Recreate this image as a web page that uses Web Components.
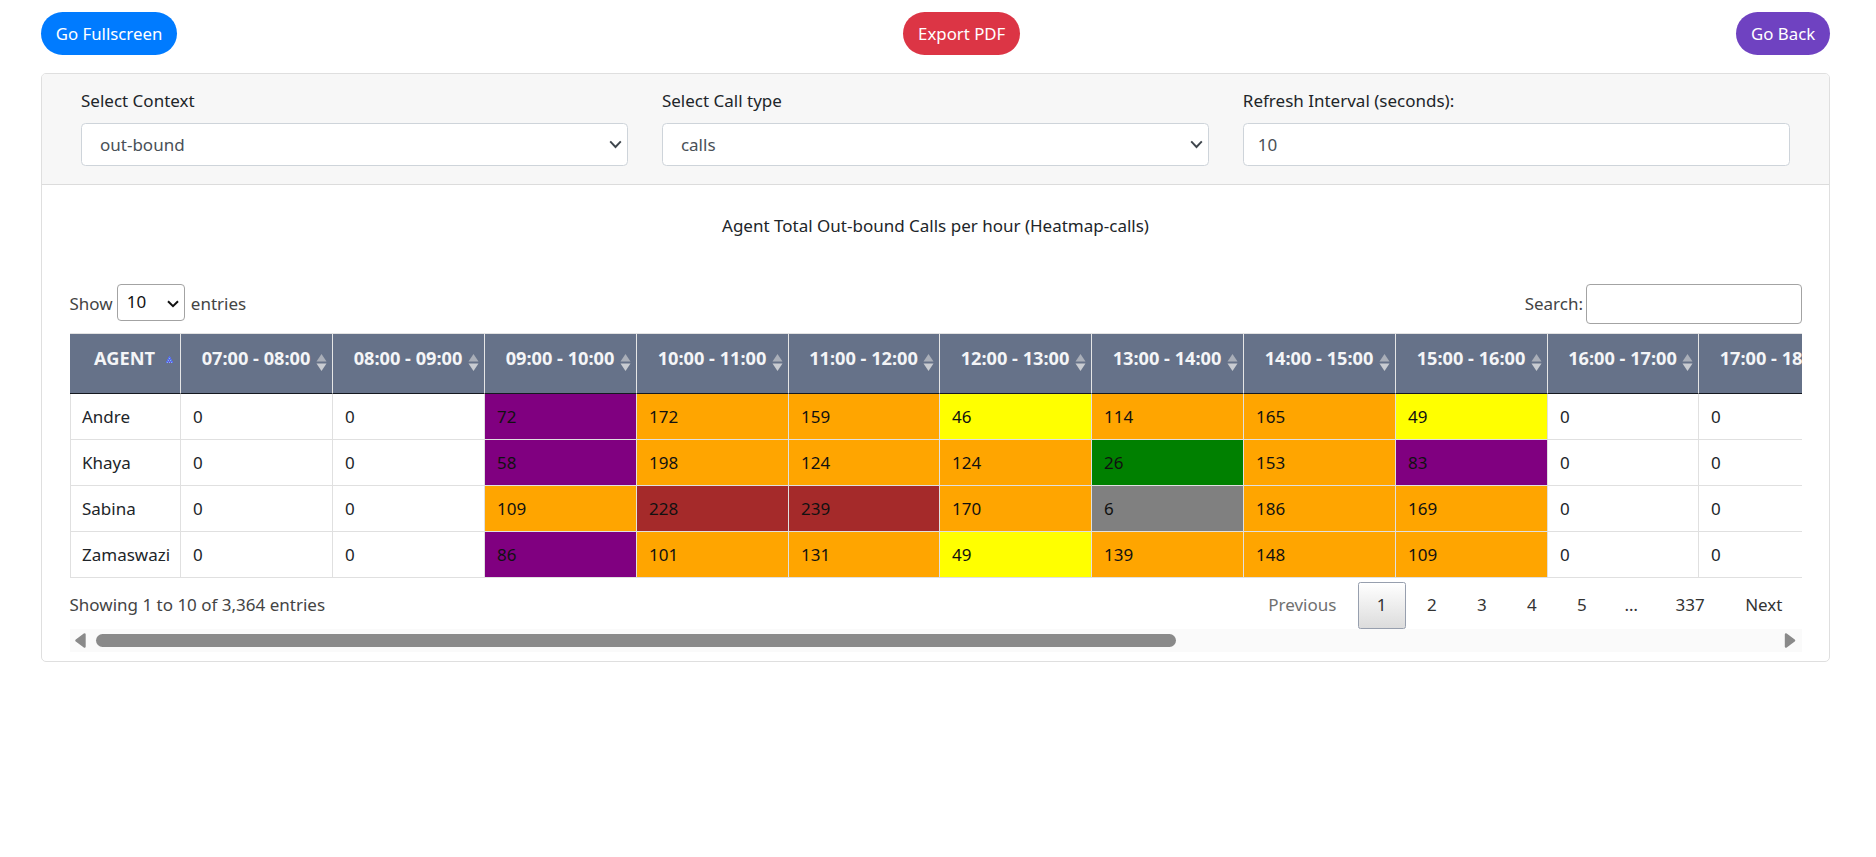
<!doctype html>
<html lang="en"><head><meta charset="utf-8"><title>Heatmap</title>
<style>
html,body{margin:0;padding:0;background:#fff;}
body{font-family:"Noto Sans","Open Sans","Liberation Sans",sans-serif;font-size:17px;color:#212529;}
</style></head>
<body>
<hm-app></hm-app>
<script>
const FONT='"Noto Sans","Open Sans","Liberation Sans",sans-serif';

class HmButton extends HTMLElement{
  constructor(){super();
    this.attachShadow({mode:'open'}).innerHTML=`<style>
      :host{display:inline-block;}
      button{display:block;height:43px;padding:0 14.8px;border:0;border-radius:21.5px;background:var(--bg,#007bff);color:#fff;font:16.8px/43px ${FONT};cursor:pointer;white-space:nowrap;}
    </style><button><slot></slot></button>`;
  }
}
customElements.define('hm-button',HmButton);

class HmField extends HTMLElement{
  constructor(){super();
    const label=this.getAttribute('label');
    const value=this.getAttribute('value');
    const isSelect=this.hasAttribute('select');
    const control=isSelect
      ?`<div class="wrap"><select><option>${value}</option></select>
         <svg class="chev" width="13" height="9" viewBox="0 0 13 9"><path d="M1.2 1.3 6.5 7 11.8 1.3" fill="none" stroke="#3f464d" stroke-width="1.9"/></svg></div>`
      :`<div class="wrap"><input value="${value}"></div>`;
    this.attachShadow({mode:'open'}).innerHTML=`<style>
      :host{display:block;min-width:0;}
      label{display:block;font:17px/25px ${FONT};color:#212529;margin-bottom:10px;}
      .wrap{position:relative;}
      select,input{display:block;box-sizing:border-box;width:100%;height:43px;padding:0 14px;margin:0;border:1px solid #ced4da;border-radius:4.5px;background:#fff;color:#495057;font:17px ${FONT};appearance:none;-webkit-appearance:none;outline:0;}
      select{padding-left:18px;}
      .chev{position:absolute;right:6px;top:17px;pointer-events:none;}
    </style><label>${label}</label>${control}`;
  }
}
customElements.define('hm-field',HmField);

class HmLength extends HTMLElement{
  constructor(){super();
    this.attachShadow({mode:'open'}).innerHTML=`<style>
      :host{display:flex;align-items:center;height:39.5px;color:#444;font:17px ${FONT};}
      .wrap{position:relative;margin:0 6px 0 4.5px;height:37px;align-self:flex-start;}
      select{display:block;box-sizing:border-box;width:67.7px;height:37px;padding:0 0 3px 8.5px;border:1px solid #a3a3a3;border-radius:4px;background:#fff;color:#111;font:17px ${FONT};appearance:none;-webkit-appearance:none;outline:0;}
      svg{position:absolute;left:50px;top:15.5px;pointer-events:none;}
    </style>Show<div class="wrap"><select><option>10</option></select><svg width="12" height="8" viewBox="0 0 12 8"><path d="M1 1.2 6 6.2 11 1.2" fill="none" stroke="#111" stroke-width="2"/></svg></div>entries`;
  }
}
customElements.define('hm-length',HmLength);

class HmSearch extends HTMLElement{
  constructor(){super();
    this.attachShadow({mode:'open'}).innerHTML=`<style>
      :host{display:flex;align-items:center;gap:3px;height:39.5px;color:#444;font:17px ${FONT};}
      input{box-sizing:border-box;width:215.5px;height:39.5px;border:1px solid #a3a3a3;border-radius:4px;background:#fff;margin:0;padding:0 4px;outline:0;}
    </style>Search:<input type="text">`;
  }
}
customElements.define('hm-search',HmSearch);

class HmTable extends HTMLElement{
  constructor(){super();
    const hours=[];for(let h=7;h<18;h++){const p=n=>String(n).padStart(2,'0');hours.push(`${p(h)}:00 - ${p(h+1)}:00`);}
    const rows=[
      ['Andre',[0,0,72,172,159,46,114,165,49,0,0]],
      ['Khaya',[0,0,58,198,124,124,26,153,83,0,0]],
      ['Sabina',[0,0,109,228,239,170,6,186,169,0,0]],
      ['Zamaswazi',[0,0,86,101,131,49,139,148,109,0,0]]];
    const colour=v=>v===0?'':v<10?'#808080':v<40?'#008000':v<50?'#ffff00':v<100?'#800080':v<200?'#ffa500':'#a52a2a';
    const sort=`<svg class="sort" width="11" height="17" viewBox="0 0 11 17"><path d="M5.5 0 10.5 7.5H.5Z" fill="#a9aeb8"/><path d="M5.5 17 10.5 9.5H.5Z" fill="#c9ccd2"/></svg>`;
    const asc=`<svg class="asc" width="7" height="7" viewBox="0 0 7 7" shape-rendering="crispEdges"><path d="M3 0H4V1H5V3H6V5H7V7H0V5H1V3H2V1H3Z" fill="#5a6fe6"/><path d="M3 2H4V3H3ZM2 4H3V5H2ZM4 4H5V5H4ZM1 6H2V7H1ZM3 6H4V7H3ZM5 6H6V7H5Z" fill="#7cc0ee"/><path d="M3 4H4V5H3ZM2 6H3V7H2ZM4 6H5V7H4Z" fill="#7a3fd0"/></svg>`;
    const widths=hours.map((_,i)=>(i===9||i===4)?151:152);
    const total=111+widths.reduce((a,b)=>a+b,0);
    this.attachShadow({mode:'open'}).innerHTML=`<style>
      :host{display:block;overflow:hidden;}
      table{border-collapse:separate;border-spacing:0;table-layout:fixed;width:${total}px;font:17px ${FONT};color:#111;}
      th{position:relative;box-sizing:border-box;height:61.7px;padding:0 0 9px;background:#667289;color:#f4f5f7;font-weight:700;font-size:18.2px;line-height:25px;text-align:center;white-space:nowrap;border-top:1px solid #e2e2e2;border-right:1px solid #e6e6e6;border-bottom:1.5px solid #14181f;overflow:hidden;}
      td{box-sizing:border-box;height:45.9px;padding:0 0 0 12.5px;border-right:1px solid #e0e0e0;border-bottom:1px solid #e0e0e0;color:#212529;white-space:nowrap;}
      td.c{color:#111;}
      td:first-child{border-left:1px solid #e0e0e0;padding-left:11.5px;}
      .sort{position:absolute;right:5px;top:20.5px;}
      .asc{position:absolute;right:6.5px;top:22px;}
    </style><table><colgroup><col style="width:111px">${widths.map(w=>`<col style="width:${w}px">`).join('')}</colgroup>
    <thead><tr><th>AGENT${asc}</th>${hours.map(h=>`<th>${h}${sort}</th>`).join('')}</tr></thead>
    <tbody>${rows.map(([n,vs])=>`<tr><td>${n}</td>${vs.map(v=>{const c=colour(v);return `<td${c?` class="c" style="background:${c}"`:''}>${v}</td>`}).join('')}</tr>`).join('')}</tbody></table>`;
  }
}
customElements.define('hm-table',HmTable);

class HmPager extends HTMLElement{
  constructor(){super();
    const items=['Previous','1','2','3','4','5','…','337','Next'];
    this.attachShadow({mode:'open'}).innerHTML=`<style>
      :host{display:flex;font:17px/25px ${FONT};color:#333;}
      a{box-sizing:border-box;height:46.4px;padding:0 18px;margin-left:2.4px;border:1px solid transparent;border-radius:2.4px;line-height:44px;text-align:center;}
      a.off{color:#707070;}
      a.num{width:47.7px;padding:0;}
      a.cur{background:linear-gradient(to bottom,#fff 0%,#dcdcdc 100%);border-color:#979fae;}
      a.dots{width:46px;padding:0;color:#333;}
    </style>${items.map((t,i)=>`<a class="${i==0?'off':t=='…'?'dots':i<=5?'num'+(i==1?' cur':''):''}">${t}</a>`).join('')}`;
  }
}
customElements.define('hm-pager',HmPager);

class HmScrollbar extends HTMLElement{
  constructor(){super();
    this.attachShadow({mode:'open'}).innerHTML=`<style>
      :host{display:flex;align-items:center;height:23.3px;background:#fafafa;padding:0 6px 0 5px;}
      .thumb{width:1080.4px;height:13.3px;border-radius:6.7px;background:#8a8a8a;margin-left:9.5px;}
      .sp{flex:1;}
      svg{display:block;}
    </style>
    <svg width="11.5" height="15" viewBox="0 0 11.5 15"><path d="M9.5 1.5 1.5 7.5 9.5 13.5Z" fill="#8a8a8a" stroke="#8a8a8a" stroke-width="2.4" stroke-linejoin="round"/></svg>
    <div class="thumb"></div><div class="sp"></div>
    <svg width="11.5" height="15" viewBox="0 0 11.5 15"><path d="M2 1.5 10 7.5 2 13.5Z" fill="#8a8a8a" stroke="#8a8a8a" stroke-width="2.4" stroke-linejoin="round"/></svg>`;
  }
}
customElements.define('hm-scrollbar',HmScrollbar);

class HmApp extends HTMLElement{
  constructor(){super();
    this.attachShadow({mode:'open'}).innerHTML=`<style>
      :host{display:block;padding:12px 46px 0 41px;font:17px ${FONT};color:#212529;}
      .top{display:flex;justify-content:space-between;}
      .mid{margin-left:10px;}
      .card{margin-top:18px;border:1px solid #dfdfdf;border-radius:5px;overflow:hidden;}
      .head{display:grid;grid-template-columns:repeat(3,1fr);column-gap:34.3px;padding:14px 39.5px 18px 39px;background:#f7f7f7;border-bottom:1px solid #dcdcdc;}
      .body{padding:27.5px 27.5px 9px 27.5px;}
      .title{text-align:center;line-height:25px;height:25px;margin-bottom:46.5px;color:#212529;}
      .bar{display:flex;justify-content:space-between;margin-bottom:9px;}
      .foot{display:flex;justify-content:space-between;align-items:center;padding:4.5px 0 .5px;color:#444;}
      .foot span{margin-bottom:2px;}
    </style>
    <div class="top">
      <hm-button>Go Fullscreen</hm-button>
      <hm-button class="mid" style="--bg:#dc3545">Export PDF</hm-button>
      <hm-button style="--bg:#6f42c1">Go Back</hm-button>
    </div>
    <div class="card">
      <div class="head">
        <hm-field label="Select Context" value="out-bound" select></hm-field>
        <hm-field label="Select Call type" value="calls" select></hm-field>
        <hm-field label="Refresh Interval (seconds):" value="10"></hm-field>
      </div>
      <div class="body">
        <div class="title">Agent Total Out-bound Calls per hour (Heatmap-calls)</div>
        <div class="bar"><hm-length></hm-length><hm-search></hm-search></div>
        <hm-table></hm-table>
        <div class="foot"><span>Showing 1 to 10 of 3,364 entries</span><hm-pager></hm-pager></div>
        <hm-scrollbar></hm-scrollbar>
      </div>
    </div>`;
  }
}
customElements.define('hm-app',HmApp);
</script>
</body></html>
